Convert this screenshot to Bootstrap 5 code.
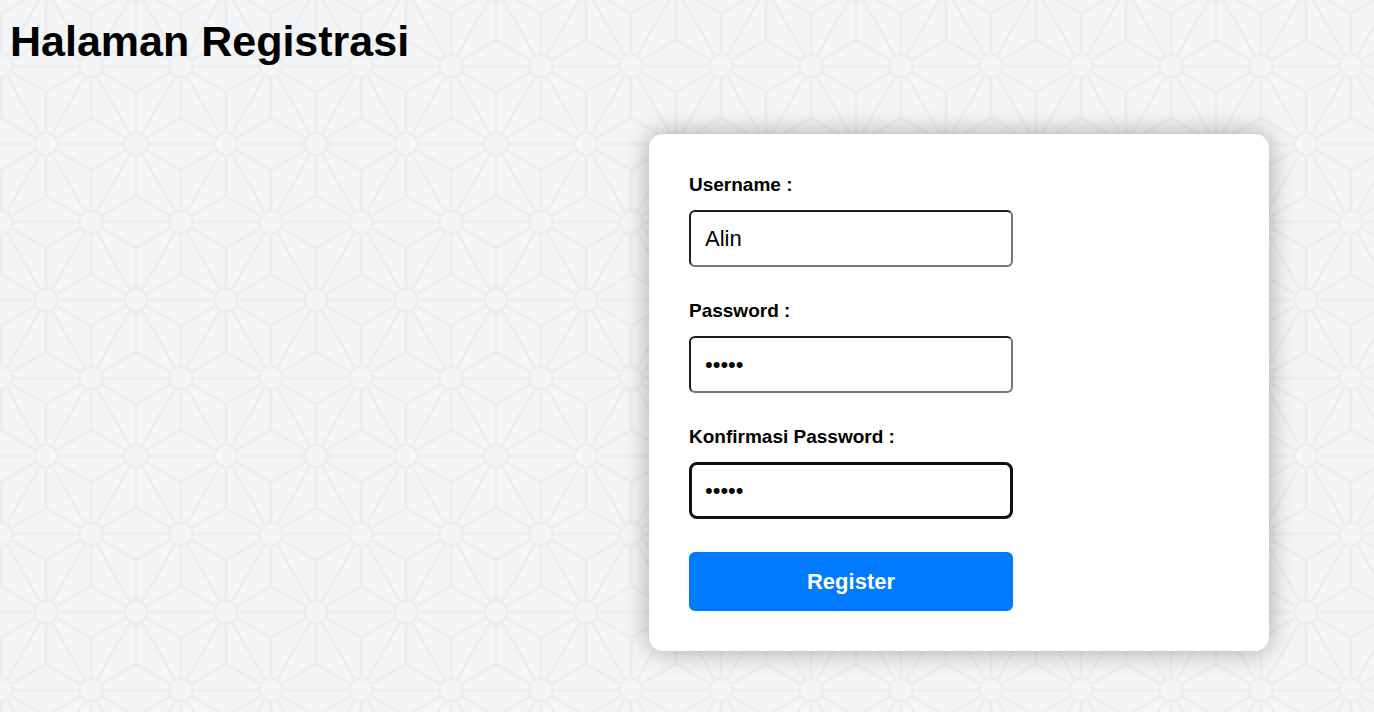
<!DOCTYPE html>
<html lang="id">
<head>
<meta charset="utf-8">
<meta name="viewport" content="width=device-width, initial-scale=1">
<title>Halaman Registrasi</title>
<link href="https://cdn.jsdelivr.net/npm/bootstrap@5.3.0/dist/css/bootstrap.min.css" rel="stylesheet">
<style>
  body {
    min-height: 100vh;
    color: #000;
    font-family: "Liberation Sans", Arial, sans-serif;
    background-color: #f3f5f7;
    /* Star lattice: hubs on a triangular grid, each triangle split at its centroid */
    background-image: url("data:image/svg+xml,%3Csvg xmlns='http://www.w3.org/2000/svg' width='90' height='156' viewBox='0 0 90 156'%3E%3Cg fill='none' stroke='%23edeef0' stroke-width='3'%3E%3Cpath d='M0 0H90M0 156H90M0 78H90M0 0L90 156M90 0L0 156M0 0L45 26L90 0M45 26V130M0 156L45 130L90 156M0 52L45 78L90 52M0 104L45 78L90 104M0 0V52M90 0V52M0 104V156M90 104V156'/%3E%3Cg fill='%23f3f5f7'%3E%3Ccircle cx='0' cy='0' r='11.5'/%3E%3Ccircle cx='90' cy='0' r='11.5'/%3E%3Ccircle cx='45' cy='78' r='11.5'/%3E%3Ccircle cx='0' cy='156' r='11.5'/%3E%3Ccircle cx='90' cy='156' r='11.5'/%3E%3C/g%3E%3C/g%3E%3C/svg%3E");
    background-position: 1px 66px;
    background-size: 90px 156px;
  }
  .page-title { font-size: 43px; line-height: 50px; padding: 16px 10px 0; }
  .register-card {
    max-width: 620px;
    margin: 68px 105px 60px auto;
    padding: 40px;
    border-radius: 14px;
    box-shadow: 0 0 26px rgba(0, 0, 0, .32);
  }
  .fields { max-width: 324px; gap: 33px; }
  .field-label { font-size: 19px; line-height: 22px; margin-bottom: 14px; }
  .field-input, .field-input:focus {
    height: 57px;
    padding: 0 14px;
    font-size: 22px;
    color: #000;
    background: #fff;
    border: 2px solid;
    border-color: #1c1c1c #767676 #767676 #1c1c1c;
    border-radius: 6px;
    box-shadow: none;
  }
  .field-input.current, .field-input:focus { border: 3px solid #101010; padding: 0 13px; border-radius: 8px; }
  .btn-register {
    --bs-btn-bg: #007bff;
    --bs-btn-hover-bg: #0069d9;
    --bs-btn-color: #fff;
    --bs-btn-hover-color: #fff;
    height: 59px;
    font-size: 22px;
    border: 0;
    border-radius: 6px;
  }
</style>
</head>
<body>
  <h1 class="page-title fw-bold m-0">Halaman Registrasi</h1>
  <main class="container-fluid p-0 overflow-hidden">
    <div class="card register-card border-0">
      <form class="fields d-flex flex-column w-100">
        <div>
          <label class="field-label fw-bold d-block" for="username">Username :</label>
          <input class="form-control field-input" type="text" id="username" name="username" value="Alin">
        </div>
        <div>
          <label class="field-label fw-bold d-block" for="password">Password :</label>
          <input class="form-control field-input" type="password" id="password" name="password" value="alin1">
        </div>
        <div>
          <label class="field-label fw-bold d-block" for="password2">Konfirmasi Password :</label>
          <input class="form-control field-input current" type="password" id="password2" name="password2" value="alin1">
        </div>
        <button class="btn btn-register fw-bold w-100" type="submit">Register</button>
      </form>
    </div>
  </main>
<script src="https://cdn.jsdelivr.net/npm/bootstrap@5.3.0/dist/js/bootstrap.bundle.min.js"></script>
</body>
</html>
